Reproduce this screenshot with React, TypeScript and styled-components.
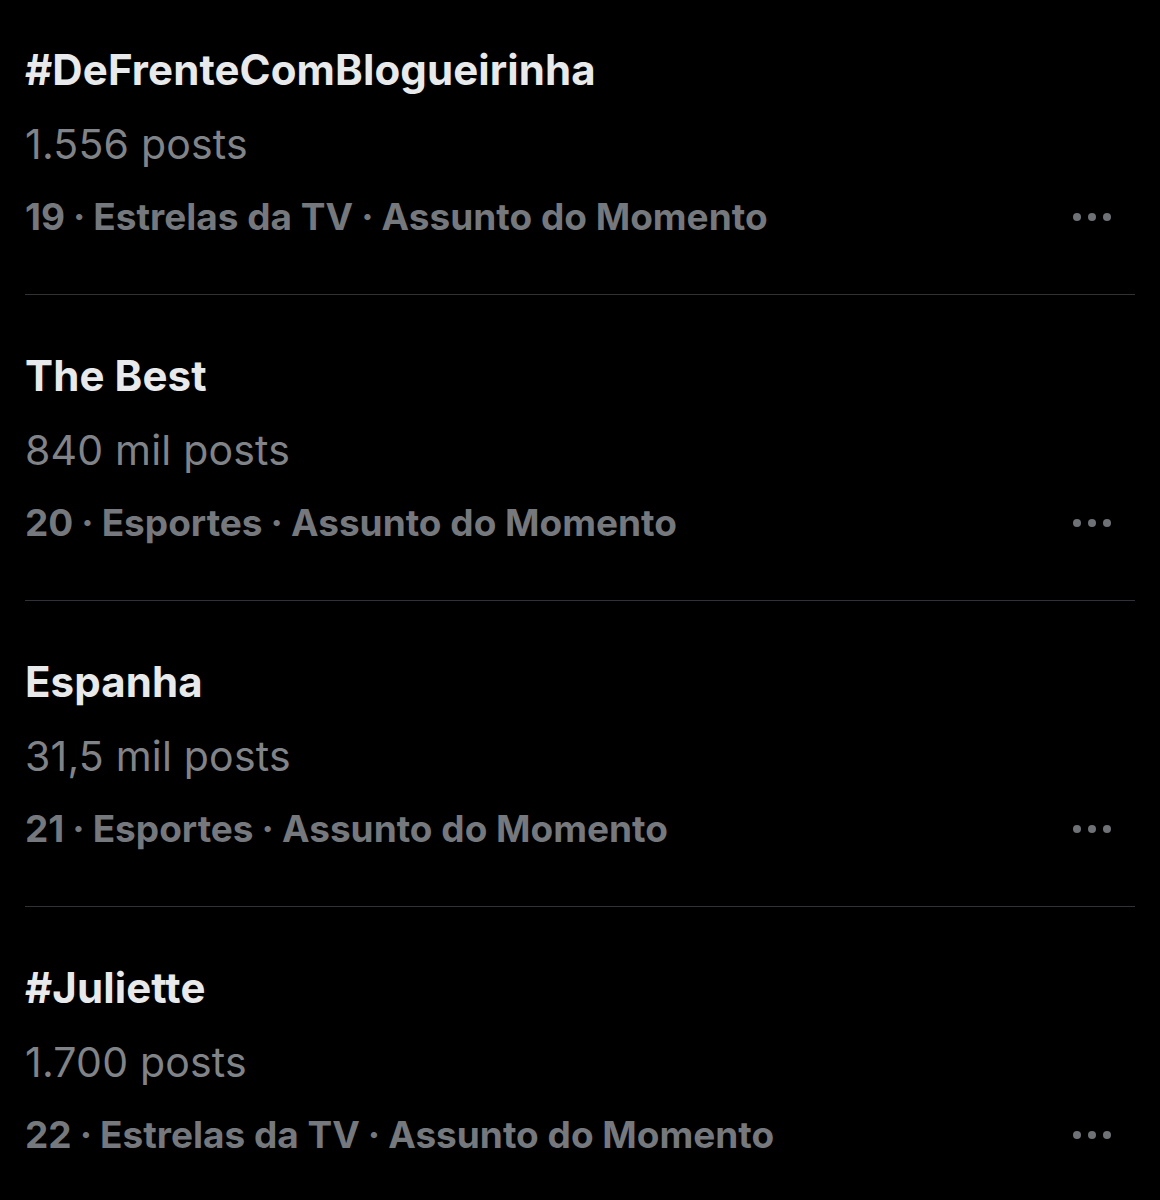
import styled, { createGlobalStyle } from "styled-components";

const GlobalStyle = createGlobalStyle`
  html, body {
    margin: 0;
    padding: 0;
    background: #000;
  }
  body {
    font-family: Inter, Roboto, "Liberation Sans", sans-serif;
  }
`;

const List = styled.div`
  width: 1160px;
  background: #000;
  padding: 0 25px;
  box-sizing: border-box;
`;

const Row = styled.div<{ $first?: boolean }>`
  position: relative;
  padding: ${(p) => (p.$first ? "33px" : "44px")} 0 41px;
  border-bottom: 1px solid #2f3336;
  &:last-child {
    border-bottom: none;
  }
`;

const Title = styled.div`
  color: #e7e9ea;
  font-size: 42px;
  font-weight: 700;
  line-height: 74px;
  letter-spacing: 0.1px;
`;

const Count = styled.div`
  color: #808387;
  font-size: 41px;
  font-weight: 400;
  line-height: 74px;
  letter-spacing: 0.2px;
`;

const Meta = styled.div`
  color: #75787c;
  font-size: 37px;
  font-weight: 700;
  line-height: 72px;
  white-space: nowrap;
`;

const Sep = styled.span`
  display: inline-block;
  margin: 0 8px;
`;

const More = styled.svg`
  position: absolute;
  right: 23px;
  bottom: 57px;
  width: 40px;
  height: 40px;
  fill: #6e7175;
`;

const trends = [
  { title: "#DeFrenteComBlogueirinha", count: "1.556 posts", meta: ["19", "Estrelas da TV", "Assunto do Momento"] },
  { title: "The Best", count: "840 mil posts", meta: ["20", "Esportes", "Assunto do Momento"] },
  { title: "Espanha", count: "31,5 mil posts", meta: ["21", "Esportes", "Assunto do Momento"] },
  { title: "#Juliette", count: "1.700 posts", meta: ["22", "Estrelas da TV", "Assunto do Momento"] },
];

const App = () => {
  return (
    <>
      <GlobalStyle />
      <List>
        {trends.map((t, i) => (
          <Row key={t.title} $first={i === 0}>
            <Title>{t.title}</Title>
            <Count>{t.count}</Count>
            <Meta>
              {t.meta.map((part, j) => (
                <span key={part}>
                  {j > 0 && <Sep>·</Sep>}
                  {part}
                </span>
              ))}
            </Meta>
            <More viewBox="0 0 40 40">
              <circle cx="5" cy="20" r="4" />
              <circle cx="20" cy="20" r="4" />
              <circle cx="35" cy="20" r="4" />
            </More>
          </Row>
        ))}
      </List>
    </>
  );
};

export default App;
